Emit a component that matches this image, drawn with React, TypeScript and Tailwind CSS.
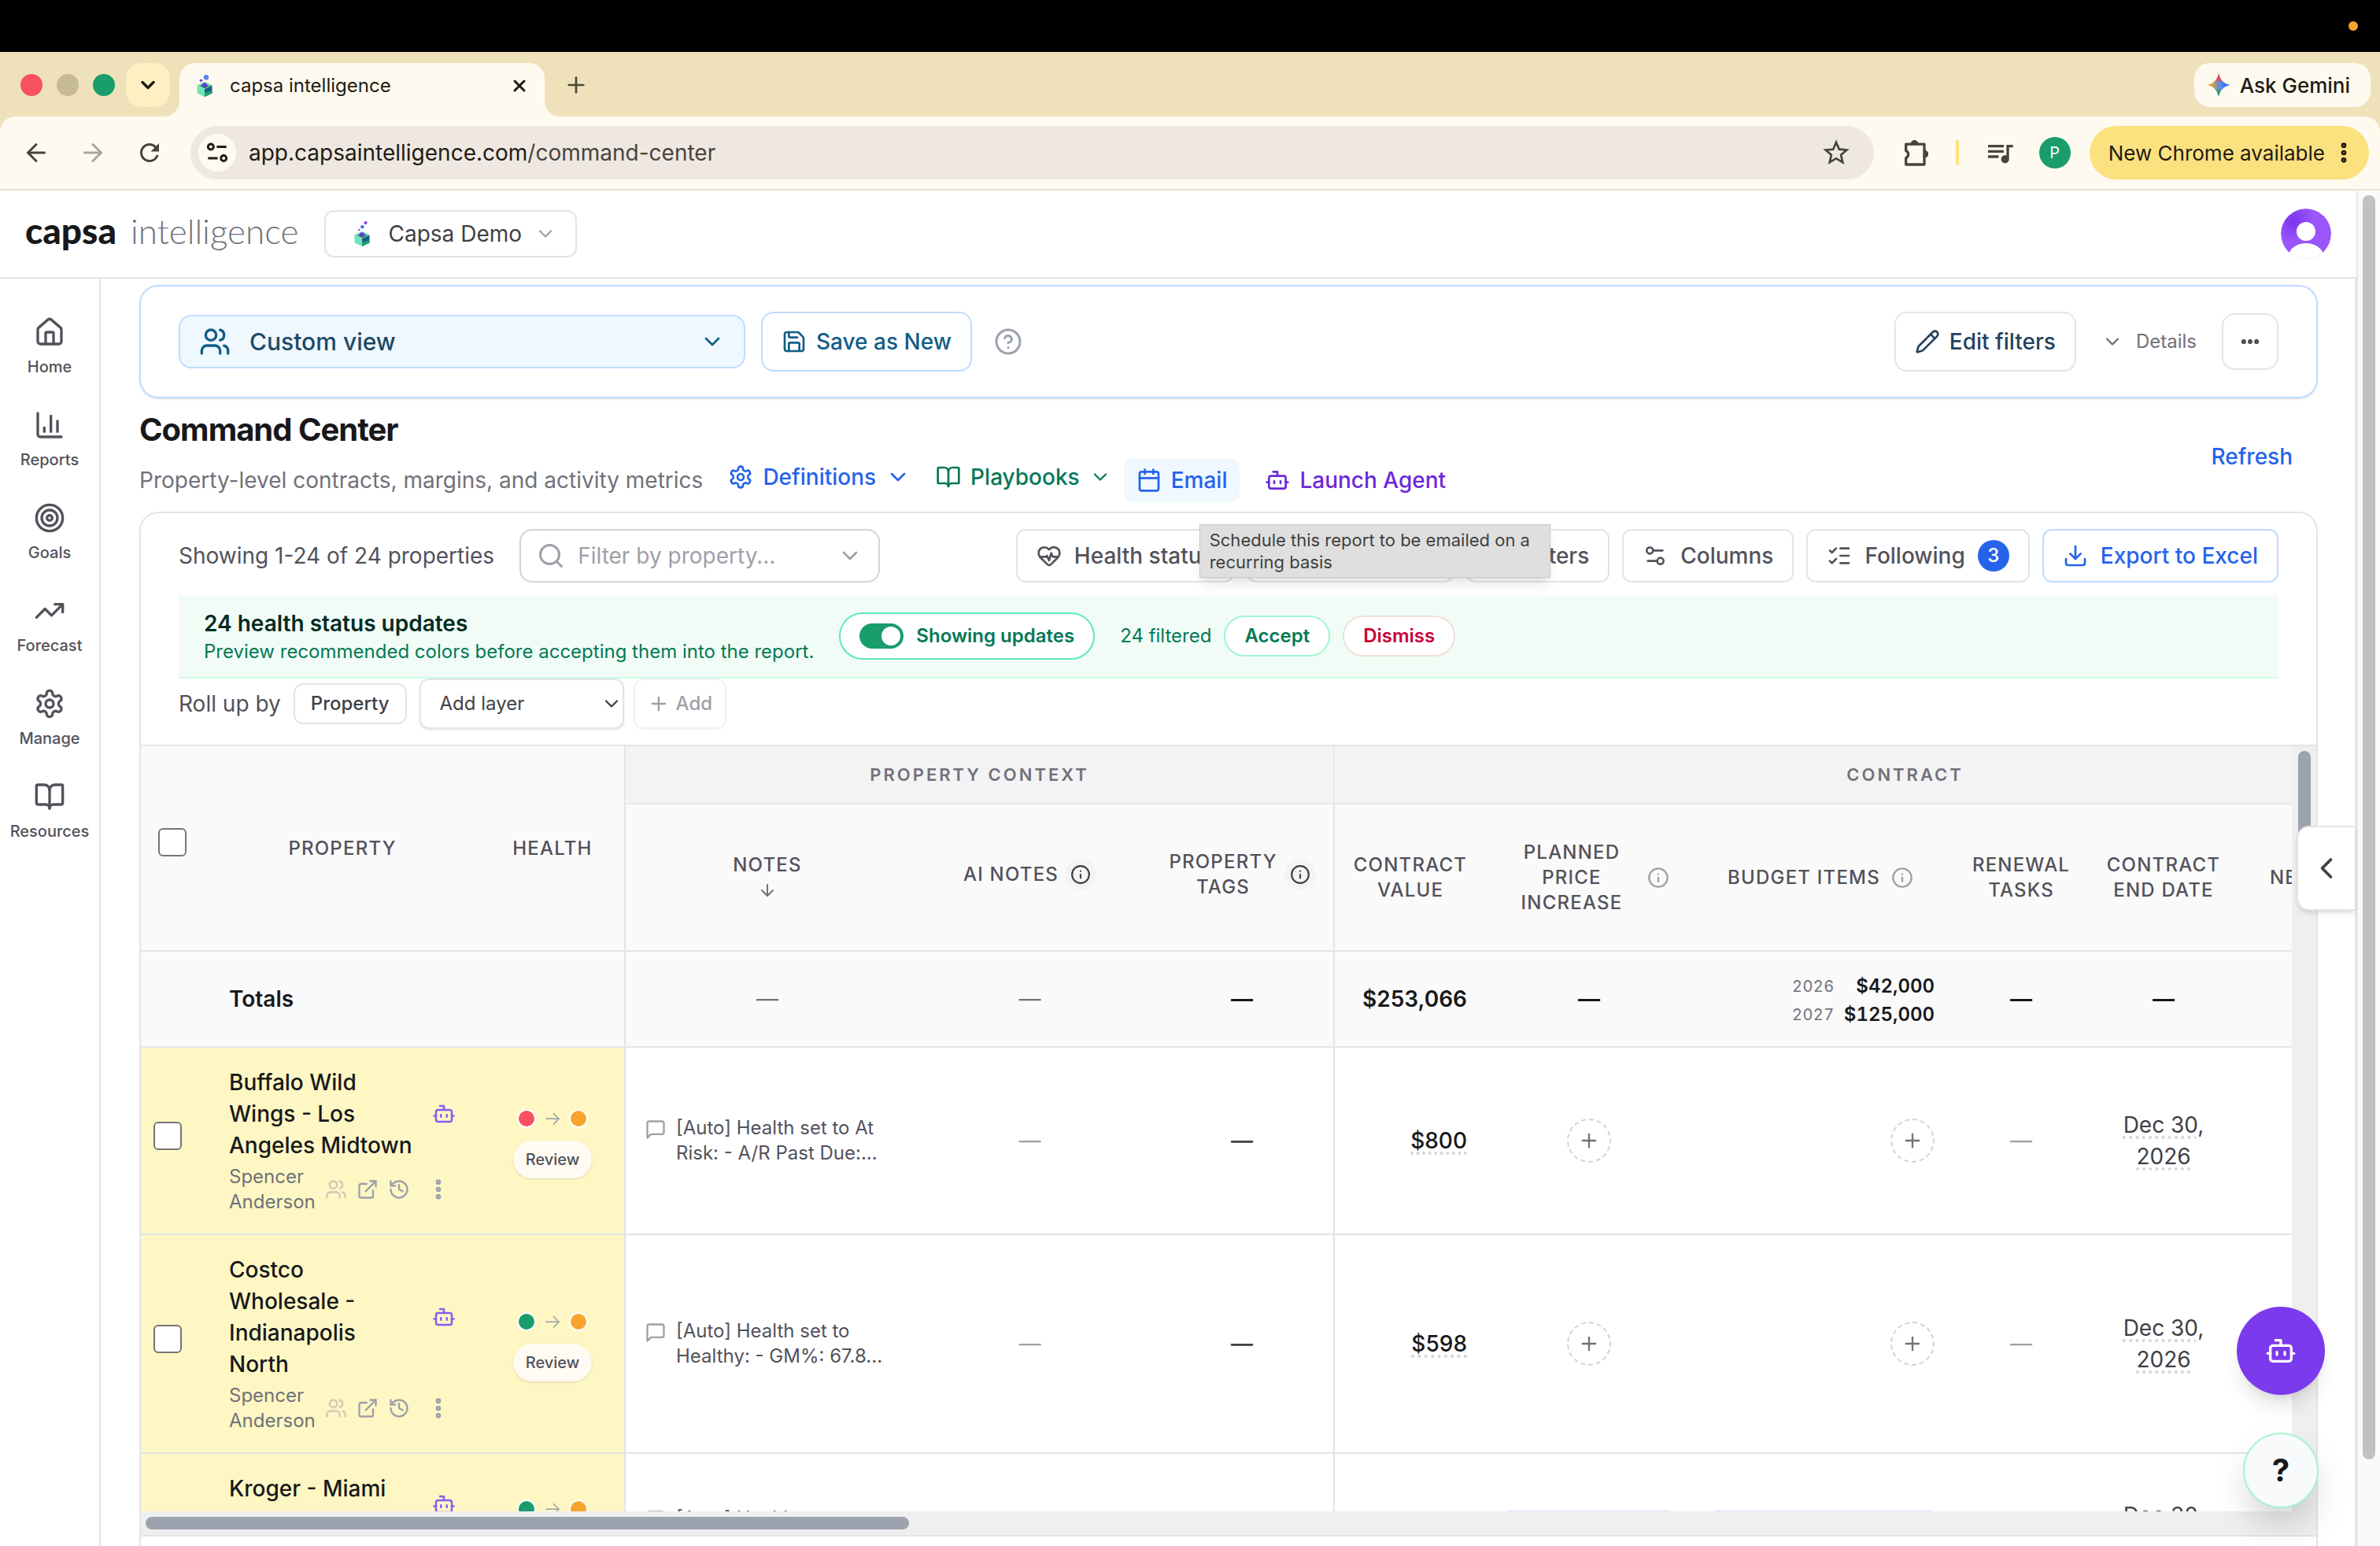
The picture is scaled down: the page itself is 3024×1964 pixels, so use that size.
import type { ComponentType, ReactNode } from 'react'
import {
  ArrowDown,
  ArrowLeft,
  ArrowRight,
  BookOpen,
  Bot,
  Calendar,
  ChartColumn,
  ChevronDown,
  ChevronLeft,
  CircleQuestionMark,
  Download,
  Ellipsis,
  EllipsisVertical,
  ExternalLink,
  HeartPulse,
  History,
  House,
  Info,
  ListChecks,
  Pencil,
  Plus,
  Save,
  Search,
  Settings2,
  SlidersHorizontal,
  Tags,
  Target,
  TrendingUp,
  Users,
  X,
} from 'lucide-react'
import { MdQueueMusic, MdRefresh, MdStarOutline } from 'react-icons/md'
import { clsx } from 'clsx'

type IconType = ComponentType<{ className?: string; strokeWidth?: number }>

interface PropertyRow {
  id: string
  name: string
  owner: string
  from: 'red' | 'green'
  note: string
  value: string
  endDate: string
  planned?: string
  budget?: string
}

const rows: PropertyRow[] = [
  {
    id: 'bww',
    name: 'Buffalo Wild Wings - Los Angeles Midtown',
    owner: 'Spencer Anderson',
    from: 'red',
    note: '[Auto] Health set to At Risk: - A/R Past Due:...',
    value: '$800',
    endDate: 'Dec 30, 2026',
  },
  {
    id: 'costco',
    name: 'Costco Wholesale - Indianapolis North',
    owner: 'Spencer Anderson',
    from: 'green',
    note: '[Auto] Health set to Healthy: - GM%: 67.8...',
    value: '$598',
    endDate: 'Dec 30, 2026',
  },
  {
    id: 'kroger',
    name: 'Kroger - Miami Beach',
    owner: 'Spencer Anderson',
    from: 'green',
    note: '[Auto] Health set to Healthy: - GM%: 61.2...',
    value: '$742',
    endDate: 'Dec 30, 2026',
    planned: '3%',
    budget: '1 item',
  },
]

const navItems: { label: string; icon: IconType }[] = [
  { label: 'Home', icon: House },
  { label: 'Reports', icon: ChartColumn },
  { label: 'Goals', icon: Target },
  { label: 'Forecast', icon: TrendingUp },
  { label: 'Manage', icon: Gear },
  { label: 'Resources', icon: BookOpen },
]

function Gear({ className, strokeWidth = 2 }: { className?: string; strokeWidth?: number }) {
  return (
    <svg viewBox="0 0 24 24" fill="none" stroke="currentColor" strokeWidth={strokeWidth} strokeLinecap="round" strokeLinejoin="round" className={className}>
      <path d="M12.22 2h-.44a2 2 0 0 0-2 2v.18a2 2 0 0 1-1 1.73l-.43.25a2 2 0 0 1-2 0l-.15-.08a2 2 0 0 0-2.73.73l-.22.38a2 2 0 0 0 .73 2.73l.15.1a2 2 0 0 1 1 1.72v.51a2 2 0 0 1-1 1.74l-.15.09a2 2 0 0 0-.73 2.73l.22.38a2 2 0 0 0 2.73.73l.15-.08a2 2 0 0 1 2 0l.43.25a2 2 0 0 1 1 1.73V20a2 2 0 0 0 2 2h.44a2 2 0 0 0 2-2v-.18a2 2 0 0 1 1-1.73l.43-.25a2 2 0 0 1 2 0l.15.08a2 2 0 0 0 2.73-.73l.22-.39a2 2 0 0 0-.73-2.73l-.15-.08a2 2 0 0 1-1-1.74v-.5a2 2 0 0 1 1-1.74l.15-.09a2 2 0 0 0 .73-2.73l-.22-.38a2 2 0 0 0-2.73-.73l-.15.08a2 2 0 0 1-2 0l-.43-.25a2 2 0 0 1-1-1.73V4a2 2 0 0 0-2-2z" />
      <circle cx="12" cy="12" r="3" />
    </svg>
  )
}

function NoteIcon({ className }: { className?: string }) {
  return (
    <svg viewBox="0 0 24 24" fill="none" stroke="currentColor" strokeWidth="2" strokeLinecap="round" strokeLinejoin="round" className={className}>
      <path d="M21 15a2 2 0 0 1-2 2H7l-4 4V5a2 2 0 0 1 2-2h14a2 2 0 0 1 2 2z" />
    </svg>
  )
}

function PuzzleIcon({ className }: { className?: string }) {
  return (
    <svg viewBox="0 0 24 24" fill="none" stroke="currentColor" strokeWidth="2" strokeLinejoin="round" className={className}>
      <path d="M4 5.500h4.500a2 2 0 0 1 4 0H18v5.500a2 2 0 0 1 0 4V21H4v-5a3 3 0 0 0 0-5.500z" />
      <path d="M8.500 5.500a2 2 0 0 1 4 0zM18 11a2 2 0 0 1 0 4z" fill="currentColor" />
    </svg>
  )
}

function Cube() {
  return (
    <g>
      <path d="M0 4.500 9.500 0 19 4.500 9.500 9z" fill="#5fd6a4" />
      <path d="M4 5 9.500 2.500 15 5 9.500 8z" fill="#156b62" />
      <path d="M0 4.500 9.500 9v10L0 14.500z" fill="#74e3b5" />
      <path d="M19 4.500 9.500 9v10l9.500-4.500z" fill="#1a5f86" />
      <path d="M9.500 19l9.500-4.500V11l-9.500 3z" fill="#1fa172" />
      <circle cx="9.500" cy="4" r="2.800" fill="#7433e3" />
    </g>
  )
}

function CapsaMark() {
  return (
    <svg viewBox="0 0 19 32" className="h-8 w-5">
      <g transform="translate(0 13)">
        <Cube />
      </g>
      <circle cx="14" cy="2.100" r="2.100" fill="#8443ec" />
      <circle cx="9.800" cy="7.200" r="2.200" fill="#4673ec" />
      <circle cx="5.800" cy="11" r="1.200" fill="#8443ec" />
    </svg>
  )
}

function CapsaFavicon() {
  return (
    <svg viewBox="0 0 19 28" className="h-7 w-5">
      <g transform="translate(0 9)">
        <Cube />
      </g>
      <circle cx="11.500" cy="3.200" r="3.200" fill="#5a86f0" />
      <circle cx="5" cy="7.200" r="1.800" fill="#8443ec" />
    </svg>
  )
}

function GeminiIcon() {
  return (
    <svg viewBox="0 0 24 24" className="size-[30px]">
      <defs>
        <linearGradient id="gem" x1="0" y1="0.500" x2="1" y2="0.500">
          <stop offset="0" stopColor="#fbb01e" />
          <stop offset="0.250" stopColor="#d9a24a" />
          <stop offset="0.420" stopColor="#7d95a8" />
          <stop offset="0.600" stopColor="#4f86f7" />
          <stop offset="1" stopColor="#2f62e8" />
        </linearGradient>
        <linearGradient id="gemV" x1="0.500" y1="0" x2="0.500" y2="1">
          <stop offset="0" stopColor="#f94144" />
          <stop offset="0.200" stopColor="#f94144" />
          <stop offset="0.420" stopColor="#f94144" stopOpacity="0" />
          <stop offset="0.650" stopColor="#1a9e6f" stopOpacity="0" />
          <stop offset="0.850" stopColor="#1a9e5f" />
        </linearGradient>
      </defs>
      <path d="M12 0c1.200 6.800 5.200 10.800 12 12-6.800 1.200-10.800 5.200-12 12-1.200-6.800-5.200-10.800-12-12C6.800 10.800 10.800 6.800 12 0z" fill="url(#gem)" />
      <path d="M12 0c1.200 6.800 5.200 10.800 12 12-6.800 1.200-10.800 5.200-12 12-1.200-6.800-5.200-10.800-12-12C6.800 10.800 10.800 6.800 12 0z" fill="url(#gemV)" />
    </svg>
  )
}

function TuneIcon() {
  return (
    <svg viewBox="0 0 24 24" fill="none" stroke="currentColor" strokeWidth="2.500" className="size-7">
      <circle cx="5" cy="5.500" r="3" />
      <path d="M11.500 5.500H22M2 18h10.500" />
      <circle cx="19" cy="18" r="3" />
    </svg>
  )
}

function BrowserChrome() {
  return (
    <div className="shrink-0 bg-[#efe2bb] text-[#1f1b13]">
      <div className="flex h-[66px] items-center justify-end bg-black px-7">
        <span className="size-3 rounded-full bg-[#f8a52e]" />
      </div>
      <div className="flex h-[82px] items-start pt-[14px] pr-3 pl-[26px]">
        <div className="flex h-14 items-center gap-[18px]">
          <span className="size-7 rounded-full bg-[#f9515f]" />
          <span className="size-7 rounded-full bg-[#c6bb93]" />
          <span className="size-7 rounded-full bg-[#199d6d]" />
        </div>
        <button aria-label="Search tabs" className="ml-[14px] flex size-14 items-center justify-center rounded-[20px] bg-[#ffefc2]">
          <ChevronDown className="size-7" strokeWidth={3} />
        </button>
        <div className="relative ml-3 flex h-[68px] w-[464px] items-center rounded-t-[20px] bg-[#fffaef] pr-4 pb-[10px] pl-[22px]">
          <span className="absolute bottom-0 -left-5 size-5 bg-[radial-gradient(circle_at_0_0,transparent_20px,#fffaef_20px)]" />
          <span className="absolute -right-5 bottom-0 size-5 bg-[radial-gradient(circle_at_100%_0,transparent_20px,#fffaef_20px)]" />
          <CapsaFavicon />
          <span className="ml-[22px] flex-1 text-2xl">capsa intelligence</span>
          <button aria-label="Close tab" className="flex size-8 items-center justify-center">
            <X className="size-6" strokeWidth={3} />
          </button>
        </div>
        <button aria-label="New tab" className="ml-6 flex h-14 w-8 items-center justify-center text-[#4a463c]">
          <Plus className="size-8" strokeWidth={2} />
        </button>
        <button className="ml-auto flex h-14 items-center gap-3 rounded-[20px] bg-[#fffaef] pr-[26px] pl-4 text-[26px] font-medium">
          <GeminiIcon />
          Ask Gemini
        </button>
      </div>
      <div className="flex h-[94px] items-center rounded-t-[20px] border-b-2 border-[#f0dfd4] bg-[#fffaef] pr-[14px] pl-7 text-[#47443c]">
        <button aria-label="Back" className="flex size-9 items-center justify-center">
          <ArrowLeft className="size-9" strokeWidth={2} />
        </button>
        <button aria-label="Forward" className="ml-9 flex size-9 items-center justify-center text-[#a8a5a0]">
          <ArrowRight className="size-9" strokeWidth={2} />
        </button>
        <button aria-label="Reload" className="ml-9 flex size-9 items-center justify-center">
          <MdRefresh className="size-9" />
        </button>
        <div className="ml-[34px] flex h-[68px] flex-1 items-center rounded-full bg-[#efe8e2] pr-7 pl-[10px]">
          <span className="flex size-12 items-center justify-center rounded-full bg-[#fffaef] text-[#1f1b13]">
            <TuneIcon />
          </span>
          <div className="ml-4 flex-1 text-[28px]">
            <span className="text-[#1f1b13]">app.capsaintelligence.com</span>/command-center
          </div>
          <MdStarOutline className="size-10" />
        </div>
        <PuzzleIcon className="ml-[34px] size-10" />
        <span className="ml-[30px] h-8 w-1 rounded-full bg-[#fce17f]" />
        <MdQueueMusic className="ml-8 size-10" />
        <span className="ml-[30px] flex size-10 items-center justify-center rounded-full bg-[#199d6d] text-xl text-white">P</span>
        <button className="ml-6 flex h-[68px] items-center rounded-full bg-[#fce17f] pr-4 pl-6 text-[26px] text-[#1f1b13]">
          New Chrome available
          <EllipsisVertical className="ml-2 size-8" strokeWidth={3} />
        </button>
      </div>
    </div>
  )
}

function AppHeader() {
  return (
    <header className="flex h-28 shrink-0 items-center border-b-2 border-[#e4e4e7] pr-8 pl-8">
      <a href="#home" className="flex items-baseline gap-[18px] pb-2 font-['Lato'] text-[44px] leading-[44px]">
        <span className="text-[46px] font-black text-[#18181b]">capsa</span>
        <span className="font-light text-[#71717a]">intelligence</span>
      </a>
      <button className="ml-8 flex h-[60px] items-center rounded-xl border-2 border-[#e4e4e7] pr-6 pl-9 text-[28px] text-[#3f3f46]">
        <CapsaMark />
        <span className="ml-6">Capsa Demo</span>
        <ChevronDown className="ml-4 size-7 text-[#a1a1aa]" />
      </button>
      <button aria-label="Account" className="ml-auto">
        <svg viewBox="0 0 64 64" className="size-16">
          <defs>
            <radialGradient id="av" cx="0.250" cy="0.250" r="0.400">
              <stop offset="0" stopColor="#7a33ea" />
              <stop offset="1" stopColor="#9a55fb" />
            </radialGradient>
            <clipPath id="avc">
              <circle cx="32" cy="32" r="32" />
            </clipPath>
          </defs>
          <g clipPath="url(#avc)">
            <circle cx="32" cy="32" r="32" fill="url(#av)" />
            <circle cx="32" cy="29" r="12" fill="#fff" />
            <ellipse cx="32" cy="60" rx="22" ry="16" fill="#fff" />
          </g>
        </svg>
      </button>
    </header>
  )
}

function Sidebar() {
  return (
    <nav className="flex w-32 shrink-0 flex-col items-center gap-[42px] border-r-2 border-[#e4e4e7] pt-12 text-[#52525b]">
      {navItems.map(({ label, icon: Icon }) => (
        <a key={label} href="#nav" className="flex flex-col items-center gap-3 text-[20px] leading-6 font-medium">
          <Icon className="size-10" strokeWidth={2} />
          {label}
        </a>
      ))}
    </nav>
  )
}

function ViewBar() {
  return (
    <section className="flex h-36 items-center rounded-3xl border-2 border-[#bedbff] px-12 text-[28px] font-medium shadow-sm">
      <button className="flex h-[68px] w-[720px] items-center rounded-2xl border-2 border-[#bedbff] bg-[#f0f8ff] px-6 text-[30px] text-[#1c4966]">
        <Users className="size-10 text-[#125d86]" strokeWidth={2} />
        <span className="ml-6 flex-1 text-left">Custom view</span>
        <ChevronDown className="size-8 text-[#125d86]" />
      </button>
      <button className="ml-5 flex h-[76px] items-center gap-3 rounded-2xl border-2 border-[#bedbff] px-6 text-[#125d86]">
        <Save className="size-8" strokeWidth={2} />
        Save as New
      </button>
      <button aria-label="Help" className="ml-7 text-[#9ca3af]">
        <CircleQuestionMark className="size-9" strokeWidth={2} />
      </button>
      <button className="ml-auto flex h-[76px] items-center gap-3 rounded-2xl border-2 border-[#e4e4ea] px-6 text-[#24425c]">
        <Pencil className="size-8" strokeWidth={2} />
        Edit filters
      </button>
      <button className="ml-8 flex items-center gap-4 text-2xl font-normal text-[#6f6f7a]">
        <ChevronDown className="size-7" />
        Details
      </button>
      <button aria-label="More" className="ml-8 flex size-[72px] items-center justify-center rounded-2xl border-2 border-[#e4e4ea] text-[#3f3f46]">
        <Ellipsis className="size-7" strokeWidth={3} />
      </button>
    </section>
  )
}

function PageTitle() {
  return (
    <div className="mt-3 flex items-center justify-between pr-8">
      <div>
        <h1 className="text-[40px] leading-[56px] font-bold tracking-tight text-[#18181b]">Command Center</h1>
        <div className="flex h-[76px] items-center pb-1 text-[28px] font-medium">
          <p className="mr-8 font-normal text-[#71717a]">Property-level contracts, margins, and activity metrics</p>
          <button className="flex items-center pb-2 text-[#2563eb]">
            <Gear className="size-8" />
            <span className="ml-3">Definitions</span>
            <ChevronDown className="ml-3 size-8" />
          </button>
          <button className="ml-8 flex items-center pb-2 text-[#047857]">
            <BookOpen className="size-8" />
            <span className="ml-3">Playbooks</span>
            <ChevronDown className="ml-3 size-7" />
          </button>
          <div className="relative ml-4">
            <button className="flex h-14 items-center gap-3 rounded-xl bg-[#eff8ff] px-4 text-[#2563eb]">
              <Calendar className="size-8" />
              Email
            </button>
            <div
              role="tooltip"
              className="absolute top-[84px] left-24 z-20 w-[446px] border border-[#c8c8c8] bg-[#dfdfdf] px-3 py-[5px] text-[22px] leading-7 font-normal text-[#3f3f3f] shadow-lg"
            >
              Schedule this report to be emailed on a recurring basis
            </div>
          </div>
          <button className="ml-8 flex items-center gap-3 text-[#6d28d9]">
            <Bot className="size-8" />
            Launch Agent
          </button>
        </div>
      </div>
      <button className="pb-2 text-[28px] font-medium text-[#2563eb]">Refresh</button>
    </div>
  )
}

function ToolButton({ icon: Icon, children, primary }: { icon: IconType; children: ReactNode; primary?: boolean }) {
  return (
    <button
      className={clsx(
        'flex h-[68px] items-center gap-4 rounded-xl border-2 bg-white px-6 text-[28px] font-medium',
        primary ? 'border-[#bedbff] text-[#2563eb]' : 'border-[#e4e4e7] text-[#52525b]',
      )}
    >
      <Icon className="size-8" strokeWidth={2} />
      {children}
    </button>
  )
}

function Toolbar() {
  return (
    <div className="px-12">
      <div className="flex h-[104px] items-center gap-4 pt-1">
        <p className="text-[28px] text-[#52525b]">Showing 1-24 of 24 properties</p>
        <div className="ml-4 flex h-[68px] w-[458px] items-center rounded-2xl border-2 border-[#d4d4d8] px-5 text-[#9f9fa9]">
          <Search className="size-9 shrink-0" />
          <input
            aria-label="Filter by property"
            placeholder="Filter by property..."
            className="ml-4 w-full min-w-0 bg-transparent text-[28px] outline-none placeholder:text-[#9f9fa9]"
          />
          <ChevronDown className="size-8 shrink-0" />
        </div>
        <div className="ml-auto flex items-center gap-4">
          <ToolButton icon={HeartPulse}>Health status</ToolButton>
          <ToolButton icon={Tags}>Bulk actions</ToolButton>
          <ToolButton icon={SlidersHorizontal}>Filters</ToolButton>
          <ToolButton icon={Settings2}>Columns</ToolButton>
          <ToolButton icon={ListChecks}>
            Following
            <span className="flex size-10 items-center justify-center rounded-full bg-[#2563eb] text-2xl text-white">3</span>
          </ToolButton>
          <ToolButton icon={Download} primary>
            Export to Excel
          </ToolButton>
        </div>
      </div>
      <div className="flex h-[106px] items-center border-b-2 border-[#d0fae5] bg-[#f2fcf7] px-8 text-2xl text-[#007a55]">
        <div className="pt-1">
          <p className="text-[28px] leading-9 font-semibold text-[#022c22]">24 health status updates</p>
          <p className="leading-9">Preview recommended colors before accepting them into the report.</p>
        </div>
        <label className="ml-8 flex h-[60px] items-center gap-4 rounded-full border-2 border-[#5ee9b5] bg-white px-6 font-semibold text-[#047857]">
          <input type="checkbox" defaultChecked className="peer sr-only" />
          <span className="flex h-8 w-14 items-center justify-end rounded-full bg-[#199d6d] px-1">
            <span className="size-6 rounded-full bg-white" />
          </span>
          Showing updates
        </label>
        <span className="ml-8">24 filtered</span>
        <button className="ml-4 h-[52px] rounded-full border-2 border-[#a4f4cf] bg-white px-6 font-semibold">Accept</button>
        <button className="ml-4 h-[52px] rounded-full border-2 border-[#f0dfd4] bg-white px-6 font-semibold text-[#c70036]">Dismiss</button>
      </div>
      <div className="flex h-[84px] items-start text-2xl">
        <span className="text-[28px] leading-[64px] text-[#52525b]">Roll up by</span>
        <button className="mt-[6px] ml-4 h-[52px] rounded-xl border-2 border-[#e4e4e7] px-5 font-medium text-[#3f3f46]">Property</button>
        <div className="relative ml-4">
          <select
            aria-label="Add layer"
            className="h-16 w-[260px] appearance-none rounded-xl border-2 border-[#e4e4e7] bg-white pl-6 text-[#3f3f46] shadow-sm"
          >
            <option>Add layer</option>
          </select>
          <ChevronDown className="pointer-events-none absolute top-[18px] right-[2px] size-7 text-[#3f3f46]" />
        </div>
        <button disabled className="ml-3 flex h-16 items-center gap-2 rounded-xl border-2 border-[#f2f2f3] px-4 font-medium text-[#9f9fa9] shadow-xs">
          <Plus className="size-7" />
          Add
        </button>
      </div>
    </div>
  )
}

function InfoDot({ filled }: { filled?: boolean }) {
  return (
    <button
      aria-label="More info"
      className={clsx(
        'flex size-10 shrink-0 items-center justify-center rounded-full',
        filled ? 'bg-[#f4f4f5] text-[#3f3f46]' : 'text-[#9f9fa9]',
      )}
    >
      <Info className={filled ? 'size-[26px]' : 'size-7'} strokeWidth={2} />
    </button>
  )
}

function HeadCell({ children, last }: { children: ReactNode; last?: boolean }) {
  return (
    <th
      className={clsx(
        'border-b-2 border-[#e4e4e7] bg-[#fafafa] text-2xl leading-8 font-medium tracking-wider text-[#52525b]',
        last && 'border-r-2',
      )}
    >
      {children}
    </th>
  )
}

function Dash({ dark }: { dark?: boolean }) {
  return <span className={dark ? 'text-[#3f3f46]' : 'text-[#9f9fa9]'}>—</span>
}

function AddCircle() {
  return (
    <button aria-label="Add value" className="inline-flex size-14 items-center justify-center rounded-full border-2 border-dashed border-[#d4d4d8] text-[#71717a]">
      <Plus className="size-7" />
    </button>
  )
}

function ValuePill({ children }: { children: ReactNode }) {
  return <button className="h-[52px] w-full rounded-md border-2 border-[#ddd6fe] bg-[#f5f3ff] text-2xl text-[#6d28d9]">{children}</button>
}

function RowView({ row }: { row: PropertyRow }) {
  const cell = 'border-b-2 border-[#e4e4e7]'
  return (
    <tr>
      <td className={clsx(cell, 'bg-[#fef7c3]')}>
        <input type="checkbox" aria-label={row.name} className="mb-3 ml-4 block size-9 appearance-none rounded-md border-2 border-[#767676] bg-white" />
      </td>
      <td className={clsx(cell, 'bg-[#fef7c3] px-6 py-6')}>
        <div className="flex items-center justify-between">
          <span className="w-[240px] leading-10 font-medium text-[#18181b]">{row.name}</span>
          <Bot className="size-[30px] text-[#8b5cf6]" />
        </div>
        <div className="mt-1 flex items-center text-[#9f9fa9]">
          <span className="w-[122px] text-2xl leading-8 text-[#71717a]">{row.owner}</span>
          <Users className="size-7 opacity-50" />
          <ExternalLink className="ml-3 size-7" />
          <History className="ml-3 size-7" />
          <EllipsisVertical className="ml-5 size-8" strokeWidth={3} />
        </div>
      </td>
      <td className={clsx(cell, 'border-r-2 bg-[#fef7c3] pl-2')}>
        <div className="flex flex-col items-center gap-2">
          <div className="flex h-10 items-center gap-[10px]">
            <span className={clsx('size-6 rounded-full border-2 border-white', row.from === 'red' ? 'bg-[#f9515f]' : 'bg-[#199d6d]')} />
            <span className="text-2xl font-light text-[#9f9fa9]">→</span>
            <span className="size-6 rounded-full border-2 border-white bg-[#f8a52e]" />
          </div>
          <button className="h-12 rounded-full bg-[#fffbf3] px-4 text-xl font-medium text-[#52525b] shadow-sm">Review</button>
        </div>
      </td>
      <td className={clsx(cell, 'px-6')}>
        <div className="flex gap-3">
          <NoteIcon className="mt-1 size-7 shrink-0 text-[#9f9fa9]" />
          <span className="w-[270px] text-2xl leading-8 text-[#52525b]">{row.note}</span>
        </div>
      </td>
      <td className={clsx(cell, 'text-center')}>
        <Dash />
      </td>
      <td className={clsx(cell, 'border-r-2 text-center font-medium')}>
        <Dash dark />
      </td>
      <td className={clsx(cell, 'pr-6 text-right font-medium text-[#18181b]')}>
        <span className="underline decoration-[#d4d4d8] decoration-dotted decoration-4 underline-offset-4">{row.value}</span>
      </td>
      <td className={clsx(cell, 'px-6 text-center')}>{row.planned ? <ValuePill>{row.planned}</ValuePill> : <AddCircle />}</td>
      <td className={clsx(cell, 'px-6 text-right')}>{row.budget ? <ValuePill>{row.budget}</ValuePill> : <AddCircle />}</td>
      <td className={clsx(cell, 'text-center')}>
        <Dash />
      </td>
      <td className={clsx(cell, 'px-8 text-center leading-10 text-[#3f3f46]')}>
        <span className="underline decoration-[#d4d4d8] decoration-dotted decoration-4 underline-offset-4">{row.endDate}</span>
      </td>
      <td className={cell} />
    </tr>
  )
}

function PropertyTable() {
  const total = 'h-[122px] border-b-2 border-[#e4e4e7] bg-[#fafafa]'
  const group = 'border-b-2 border-[#e8e8ea] bg-[#f3f3f4] pt-0.5 text-[22px] font-semibold tracking-[3px] text-[#71717a]'
  return (
    <table className="w-[2966px] table-fixed border-separate border-spacing-0 text-[28px]">
      <colgroup>
        <col className="w-[88px]" />
        <col className="w-[336px]" />
        <col className="w-[192px]" />
        <col className="w-[360px]" />
        <col className="w-[307px]" />
        <col className="w-[234px]" />
        <col className="w-[192px]" />
        <col className="w-[262px]" />
        <col className="w-[332px]" />
        <col className="w-[172px]" />
        <col className="w-[190px]" />
        <col className="w-[301px]" />
      </colgroup>
      <thead>
        <tr className="text-2xl font-medium text-[#52525b]">
          <th rowSpan={2} className="border-b-2 border-[#e4e4e7] bg-[#fafafa]">
            <input type="checkbox" aria-label="Select all" className="mb-4 ml-[22px] block size-9 appearance-none rounded-md border-2 border-[#767676] bg-white" />
          </th>
          <th rowSpan={2} className="border-b-2 border-[#e4e4e7] bg-[#fafafa] font-medium tracking-wider">PROPERTY</th>
          <th rowSpan={2} className="border-r-2 border-b-2 border-[#e4e4e7] bg-[#fafafa] pl-2 font-medium tracking-wider">HEALTH</th>
          <th colSpan={3} className={clsx(group, 'h-[74px] border-r-2')}>
            PROPERTY CONTEXT
          </th>
          <th colSpan={6} className={group}>
            CONTRACT
          </th>
        </tr>
        <tr className="h-[187px]">
          <HeadCell>
            <div className="pb-1">
              NOTES
              <ArrowDown className="mx-auto mt-1 size-6 text-[#71717a]" />
            </div>
          </HeadCell>
          <HeadCell>
            <div className="flex items-center justify-center gap-2 pb-2">
              AI NOTES
              <InfoDot filled />
            </div>
          </HeadCell>
          <HeadCell last>
            <div className="flex items-center justify-center gap-2 pb-2">
              <span className="w-[140px]">PROPERTY TAGS</span>
              <InfoDot filled />
            </div>
          </HeadCell>
          <HeadCell>
            <div className="px-5">CONTRACT VALUE</div>
          </HeadCell>
          <HeadCell>
            <div className="flex items-center justify-center gap-1">
              <span className="w-[172px]">PLANNED PRICE INCREASE</span>
              <InfoDot />
            </div>
          </HeadCell>
          <HeadCell>
            <div className="flex items-center justify-center gap-2">
              BUDGET ITEMS
              <InfoDot />
            </div>
          </HeadCell>
          <HeadCell>
            <div className="px-4">RENEWAL TASKS</div>
          </HeadCell>
          <HeadCell>
            <div className="px-4">CONTRACT END DATE</div>
          </HeadCell>
          <HeadCell>
            <div className="pr-4">NEXT INCREASE</div>
          </HeadCell>
        </tr>
      </thead>
      <tbody>
        <tr className="text-center font-semibold text-[#18181b]">
          <td className={total} />
          <td className={clsx(total, 'pl-6 text-left')}>Totals</td>
          <td className={clsx(total, 'border-r-2')} />
          <td className={clsx(total, 'font-normal text-[#71717a]')}>—</td>
          <td className={clsx(total, 'font-normal text-[#71717a]')}>—</td>
          <td className={clsx(total, 'border-r-2')}>—</td>
          <td className={clsx(total, 'pr-6 text-right')}>$253,066</td>
          <td className={total}>—</td>
          <td className={clsx(total, 'pr-6 text-right')}>
            <div className="grid grid-cols-[auto_auto] items-center justify-end gap-x-3 pt-1 text-2xl leading-9 tabular-nums">
              <span className="text-xl font-normal tracking-wide text-[#71717a]">2026</span>
              <span>$42,000</span>
              <span className="text-xl font-normal tracking-wide text-[#71717a]">2027</span>
              <span>$125,000</span>
            </div>
          </td>
          <td className={total}>—</td>
          <td className={total}>—</td>
          <td className={total} />
        </tr>
        {rows.map((row) => (
          <RowView key={row.id} row={row} />
        ))}
      </tbody>
    </table>
  )
}

export default function App() {
  return (
    <div className="relative flex h-screen flex-col overflow-hidden bg-white font-['Inter',sans-serif]">
      <BrowserChrome />
      <div className="flex min-h-0 flex-1">
        <div className="flex min-w-0 flex-1 flex-col">
          <AppHeader />
          <div className="flex min-h-0 flex-1">
            <Sidebar />
            <main className="relative flex min-w-0 flex-1 flex-col border-r-2 border-[#e4e4e7] pt-2 pr-[47px] pl-[49px]">
              <ViewBar />
              <PageTitle />
              <section className="flex min-h-0 flex-1 flex-col rounded-t-3xl border-2 border-b-0 border-[#e4e4e7]">
                <Toolbar />
                <div className="flex min-h-0 flex-1 flex-col border-y-2 border-[#e4e4e7]">
                  <div className="flex min-h-0 flex-1">
                    <div className="min-w-0 flex-1 overflow-hidden">
                      <PropertyTable />
                    </div>
                    <div className="w-[31px] shrink-0 bg-[#efefef] pt-[6px] pr-[7px] pl-2">
                      <div className="h-40 rounded-full bg-[#9ca3af]" />
                    </div>
                  </div>
                  <div className="h-[30px] shrink-0 bg-[#efefef] px-[6px] py-[7px]">
                    <div className="h-4 w-[970px] rounded-full bg-[#9ca3af]" />
                  </div>
                </div>
                <div className="h-3 shrink-0" />
              </section>
              <button
                aria-label="Open panel"
                className="absolute top-[695px] right-0 flex h-[108px] w-[74px] items-center justify-center rounded-l-2xl border-2 border-r-0 border-[#e4e4e7] bg-white text-[#3f3f46] shadow-md"
              >
                <ChevronLeft className="size-11" strokeWidth={2} />
              </button>
              <button
                aria-label="Launch agent"
                className="absolute right-[38px] bottom-48 flex size-28 items-center justify-center rounded-full bg-[#7c3aed] text-white shadow-xl"
              >
                <Bot className="size-10" />
              </button>
              <button
                aria-label="Help"
                className="absolute right-[46px] bottom-12 flex size-24 items-center justify-center rounded-full border-2 border-[#a4f4cf] bg-[#f8fafc] text-[40px] font-bold text-[#18181b] shadow-2xl"
              >
                ?
              </button>
            </main>
          </div>
        </div>
        <div className="w-[30px] shrink-0 border-l-2 border-[#e8e8e8] bg-[#fafafa] px-[6px] pt-[6px]">
          <div className="h-[1606px] w-4 rounded-full bg-[#c1c1c1]" />
        </div>
      </div>
    </div>
  )
}
